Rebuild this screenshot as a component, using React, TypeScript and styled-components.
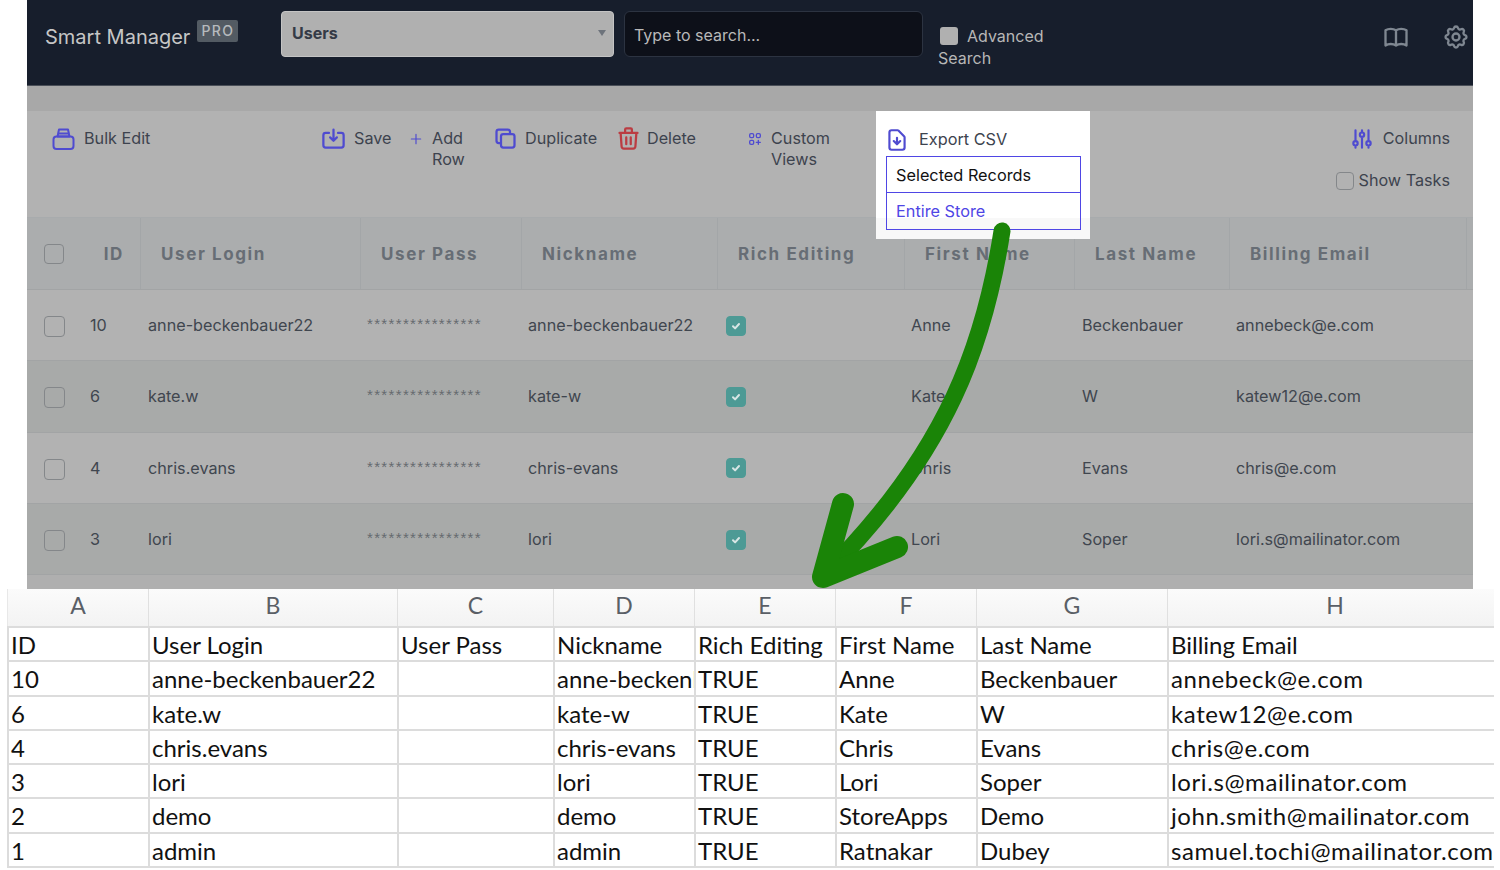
import React from "react";
import styled, { createGlobalStyle } from "styled-components";
import {
  HiOutlineAdjustments,
  HiOutlineBookOpen,
  HiOutlineCog,
  HiOutlineDocumentDownload,
  HiOutlineDuplicate,
  HiOutlineSave,
  HiOutlineTrash,
  HiOutlineViewGridAdd,
  HiOutlinePlus,
} from "react-icons/hi";

const Global = createGlobalStyle`
  html, body { margin: 0; padding: 0; background: #fff; }
  body { font-family: Inter, "Liberation Sans", sans-serif; }
`;

const Page = styled.div`
  position: relative;
  width: 1500px;
  height: 870px;
  overflow: hidden;
  background: #fff;
`;

const AppFrame = styled.section`
  position: relative;
  width: 1446px;
  height: 589px;
  margin-left: 27px;
  overflow: hidden;
  background: #afafaf;
`;

const Header = styled.header`
  display: flex;
  align-items: flex-start;
  height: 86px;
  padding: 11px 3px 0 18px;
  box-sizing: border-box;
  background: #171e2c;
  border-bottom: 1px solid #4a4f58;
`;

const Logo = styled.div`
  display: flex;
  align-items: flex-start;
  width: 236px;
  flex: none;
  padding-top: 9px;
  color: #c6c6c6;
  font-size: 20px;
  line-height: 34px;
`;

const ProBadge = styled.span`
  margin: 0 0 0 7px;
  height: 22px;
  width: 41px;
  box-sizing: border-box;
  text-align: center;
  border-radius: 2px;
  background: #535b63;
  color: #b6babd;
  font-size: 14px;
  font-weight: 500;
  letter-spacing: 1.4px;
  line-height: 21px;
`;

const SelectBox = styled.div`
  position: relative;
  flex: none;
  width: 333px;
  height: 46px;
  box-sizing: border-box;
  padding: 0 10px;
  border-radius: 4px;
  border: 1px solid #c4c4c4;
  background: #b0b0b0;
  color: #343a46;
  font-size: 16px;
  font-weight: 700;
  line-height: 43px;
`;

const Caret = styled.span`
  position: absolute;
  right: 7px;
  top: 18px;
  width: 0;
  height: 0;
  border-left: 4px solid transparent;
  border-right: 4px solid transparent;
  border-top: 6px solid #6d737b;
`;

const SearchBox = styled.div`
  flex: none;
  width: 299px;
  height: 46px;
  margin-left: 10px;
  box-sizing: border-box;
  padding: 0 9px;
  border-radius: 6px;
  border: 1px solid #2c3341;
  background-color: #0d1019;
  background-image: radial-gradient(#1b202c 0.6px, transparent 0.7px);
  background-size: 4px 4px;
  color: #b9b9b9;
  font-size: 16px;
  line-height: 46px;
`;

const Advanced = styled.label`
  flex: none;
  width: 116px;
  margin: 14px 0 0 15px;
  color: #b7b7b7;
  font-size: 16px;
  line-height: 22px;
`;

const AdvancedBox = styled.span`
  display: inline-block;
  width: 18px;
  height: 18px;
  margin: 0 9px 0 2px;
  vertical-align: -3px;
  border-radius: 3px;
  background: #b0b0b0;
`;

const HeaderIcons = styled.div`
  display: flex;
  align-items: center;
  gap: 32px;
  margin-left: auto;
  padding-top: 12px;
  color: #7f8791;
  font-size: 28px;
`;

const Band = styled.div`
  height: 25px;
  background: #a8a8a8;
`;

const Toolbar = styled.div`
  display: flex;
  align-items: flex-start;
  height: 107px;
  box-sizing: border-box;
  padding: 17px 23px 0 25px;
  background: #b2b2b2;
  border-bottom: 1px solid #a8abad;
  color: #3d434e;
  font-size: 16.2px;
  line-height: 21px;
`;

const Tool = styled.div<{ $w: number; $gap: number; $text?: number }>`
  display: flex;
  flex: none;
  width: ${(p) => p.$w}px;
  gap: ${(p) => p.$gap}px;
  & > span { width: ${(p) => (p.$text ? `${p.$text}px` : "auto")}; }
`;

const ToolIcon = styled.div<{ $c?: string; $s?: number; $w?: number }>`
  display: flex;
  justify-content: center;
  flex: none;
  width: ${(p) => p.$w ?? 22}px;
  height: 21px;
  align-items: center;
  color: ${(p) => p.$c ?? "#4f4bd0"};
  font-size: ${(p) => p.$s ?? 26}px;
  & > svg { flex: none; }
`;

const RightTools = styled.div`
  display: flex;
  flex-direction: column;
  align-items: flex-end;
  gap: 21px;
  margin-left: auto;
`;

const ColumnsTool = styled.div<{ $gap: number }>`
  display: flex;
  align-items: center;
  gap: ${(p) => p.$gap}px;
`;

const CheckBox = styled.span<{ $on?: boolean; $s?: number }>`
  display: flex;
  align-items: center;
  justify-content: center;
  flex: none;
  box-sizing: border-box;
  width: ${(p) => p.$s ?? 20}px;
  height: ${(p) => p.$s ?? 20}px;
  border-radius: 4px;
  border: 1px solid ${(p) => (p.$on ? "#4d9a95" : "#84878a")};
  background: ${(p) => (p.$on ? "#4d9a95" : "transparent")};
  color: #d8e6e5;
`;

const Row = styled.div<{ $alt?: boolean; $head?: boolean }>`
  display: grid;
  grid-template-columns: 57px 57px 220px 161px 196px 187px 170px 155px 237px 6px;
  height: ${(p) => (p.$head ? 72 : 71.33)}px;
  align-items: center;
  box-sizing: border-box;
  background: ${(p) => (p.$head ? "#abadae" : p.$alt ? "#a8aaa9" : "#b2b2b2")};
  border-bottom: 1px solid #a2a4a5;
  color: #40464f;
  font-size: 16.2px;
`;

const HeadCell = styled.div<{ $right?: boolean }>`
  display: flex;
  align-items: center;
  justify-content: ${(p) => (p.$right ? "flex-end" : "flex-start")};
  height: 100%;
  box-sizing: border-box;
  padding: ${(p) => (p.$right ? "0 16px 0 0" : "0 0 0 20px")};
  border-right: 1px solid #a3a6a8;
  color: #676d75;
  font-size: 17px;
  font-weight: 700;
  letter-spacing: 1.6px;
`;

const Cell = styled.div<{ $pad?: number }>`
  padding-left: ${(p) => p.$pad ?? 6}px;
  white-space: nowrap;
`;

const BoxCell = styled.div<{ $pad?: number; $top?: number }>`
  padding-left: ${(p) => p.$pad ?? 17}px;
  padding-top: ${(p) => p.$top ?? 0}px;
`;

const Stars = styled.div`
  padding: 0 0 3px 6px;
  color: #666a6f;
  font-family: "Liberation Sans", sans-serif;
  font-size: 15px;
  letter-spacing: 1.35px;
`;

const ExportPopup = styled.div`
  position: absolute;
  left: 849px;
  top: 111px;
  width: 214px;
  height: 128px;
  box-sizing: border-box;
  padding: 18px 9px 0 10px;
  background: linear-gradient(#fff 107px, #f8f8f8 107px);
  color: #3d434e;
  font-size: 16.3px;
  line-height: 21px;
`;

const ExportTitle = styled.div`
  display: flex;
  gap: 11px;
  height: 27px;
`;

const Option = styled.div<{ $active?: boolean }>`
  height: 37px;
  box-sizing: border-box;
  padding-left: 9px;
  border: 1px solid #4f46e5;
  border-top: ${(p) => (p.$active ? "none" : "1px solid #4f46e5")};
  color: ${(p) => (p.$active ? "#4f46e5" : "#111")};
  line-height: 36px;
`;

const Arrow = styled.svg`
  position: absolute;
  left: 0;
  top: 0;
  pointer-events: none;
`;

const Sheet = styled.section`
  width: 1487px;
  margin-left: 7px;
  overflow: hidden;
  font-family: Lato, "Open Sans", sans-serif;
  color: #111;
`;

const SheetRow = styled.div<{ $head?: boolean }>`
  display: grid;
  grid-template-columns: 141px 249px 156px 141px 141px 141px 191px 335px;
  height: ${(p) => (p.$head ? 39 : 34.3)}px;
  box-sizing: border-box;
  background: ${(p) => (p.$head ? "linear-gradient(#fbfbfb, #f3f3f3)" : "#fff")};
  border-bottom: 2px solid #dcdcdc;
`;

const Letter = styled.div`
  border-left: 1px solid #e0e0e0;
  text-align: center;
  color: #5a5f66;
  font-size: 23px;
  line-height: 32px;
  &:first-child { border-left: 1px solid #e8e8e8; }
`;

const SheetCell = styled.div<{ $wide?: boolean }>`
  overflow: hidden;
  white-space: nowrap;
  border-left: 2px solid #dcdcdc;
  padding-left: 2px;
  font-size: 24px;
  letter-spacing: ${(p) => (p.$wide ? 0.6 : 0)}px;
  line-height: 34px;
`;

const rows = [
  ["10", "anne-beckenbauer22", "anne-beckenbauer22", "Anne", "Beckenbauer", "annebeck@e.com"],
  ["6", "kate.w", "kate-w", "Kate", "W", "katew12@e.com"],
  ["4", "chris.evans", "chris-evans", "Chris", "Evans", "chris@e.com"],
  ["3", "lori", "lori", "Lori", "Soper", "lori.s@mailinator.com"],
];

const sheet = [
  ["ID", "User Login", "User Pass", "Nickname", "Rich Editing", "First Name", "Last Name", "Billing Email"],
  ["10", "anne-beckenbauer22", "", "anne-beckenbauer22", "TRUE", "Anne", "Beckenbauer", "annebeck@e.com"],
  ["6", "kate.w", "", "kate-w", "TRUE", "Kate", "W", "katew12@e.com"],
  ["4", "chris.evans", "", "chris-evans", "TRUE", "Chris", "Evans", "chris@e.com"],
  ["3", "lori", "", "lori", "TRUE", "Lori", "Soper", "lori.s@mailinator.com"],
  ["2", "demo", "", "demo", "TRUE", "StoreApps", "Demo", "john.smith@mailinator.com"],
  ["1", "admin", "", "admin", "TRUE", "Ratnakar", "Dubey", "samuel.tochi@mailinator.com"],
];

const BulkIcon = () => (
  <svg width="23" height="24" viewBox="0 0 23 24" fill="none" stroke="currentColor" strokeWidth="2" strokeLinejoin="round">
    <path d="M7 2.5h9l1.5 7h-12z" />
    <path d="M6 6.5h11" />
    <rect x="1.5" y="9.5" width="20" height="12.5" rx="3" />
  </svg>
);

const Check = () => (
  <svg width="12" height="12" viewBox="0 0 12 12" fill="none" stroke="currentColor" strokeWidth="2" strokeLinecap="round" strokeLinejoin="round">
    <path d="M3 6.3l2.1 2.1L9 4" />
  </svg>
);

export default function App() {
  return (
    <Page>
      <Global />
      <AppFrame>
        <Header>
          <Logo>
            Smart Manager<ProBadge>PRO</ProBadge>
          </Logo>
          <SelectBox>
            Users
            <Caret />
          </SelectBox>
          <SearchBox>Type to search...</SearchBox>
          <Advanced>
            <AdvancedBox />
            Advanced Search
          </Advanced>
          <HeaderIcons>
            <HiOutlineBookOpen />
            <HiOutlineCog />
          </HeaderIcons>
        </Header>
        <Band />
        <Toolbar>
          <Tool $w={270} $gap={10}>
            <ToolIcon><BulkIcon /></ToolIcon>
            <span>Bulk Edit</span>
          </Tool>
          <Tool $w={88} $gap={10}>
            <ToolIcon $s={27}><HiOutlineSave /></ToolIcon>
            <span>Save</span>
          </Tool>
          <Tool $w={84} $gap={11}>
            <ToolIcon $w={11} $s={14}><HiOutlinePlus /></ToolIcon>
            <span>Add Row</span>
          </Tool>
          <Tool $w={123} $gap={9}>
            <ToolIcon $s={27}><HiOutlineDuplicate /></ToolIcon>
            <span>Duplicate</span>
          </Tool>
          <Tool $w={131} $gap={8}>
            <ToolIcon $c="#bb3c42" $s={27}><HiOutlineTrash /></ToolIcon>
            <span>Delete</span>
          </Tool>
          <Tool $w={120} $gap={10} $text={70}>
            <ToolIcon $w={13} $s={16}><HiOutlineViewGridAdd /></ToolIcon>
            <span>Custom Views</span>
          </Tool>
          <RightTools>
            <ColumnsTool $gap={10}>
              <ToolIcon $s={26}><HiOutlineAdjustments /></ToolIcon>
              <span>Columns</span>
            </ColumnsTool>
            <ColumnsTool $gap={5}>
              <CheckBox $s={18} />
              <span>Show Tasks</span>
            </ColumnsTool>
          </RightTools>
        </Toolbar>
        <Row $head>
          <BoxCell $top={1}><CheckBox /></BoxCell>
          <HeadCell $right>ID</HeadCell>
          <HeadCell>User Login</HeadCell>
          <HeadCell>User Pass</HeadCell>
          <HeadCell>Nickname</HeadCell>
          <HeadCell>Rich Editing</HeadCell>
          <HeadCell>First Name</HeadCell>
          <HeadCell>Last Name</HeadCell>
          <HeadCell>Billing Email</HeadCell>
        </Row>
        {rows.map((r, i) => (
          <Row key={r[0]} $alt={i % 2 === 1}>
            <BoxCell $top={3}><CheckBox $s={21} /></BoxCell>
            <Cell>{r[0]}</Cell>
            <Cell $pad={7}>{r[1]}</Cell>
            <Stars>****************</Stars>
            <Cell>{r[2]}</Cell>
            <BoxCell $pad={8} $top={1}><CheckBox $on><Check /></CheckBox></BoxCell>
            <Cell>{r[3]}</Cell>
            <Cell $pad={7}>{r[4]}</Cell>
            <Cell>{r[5]}</Cell>
          </Row>
        ))}
        <ExportPopup>
          <ExportTitle>
            <ToolIcon $s={26}><HiOutlineDocumentDownload /></ToolIcon>
            <span>Export CSV</span>
          </ExportTitle>
          <Option>Selected Records</Option>
          <Option $active>Entire Store</Option>
        </ExportPopup>
        <Arrow width="1446" height="589" viewBox="27 0 1446 589" fill="none" stroke="#1a8407" strokeLinecap="round" strokeLinejoin="round">
          <path d="M1002 231 C 985 340, 950 450, 824 575" strokeWidth="17" />
          <path d="M843 504 L 823 577 L 897 547" strokeWidth="22" />
        </Arrow>
      </AppFrame>
      <Sheet>
        <SheetRow $head>
          {"ABCDEFGH".split("").map((l) => (
            <Letter key={l}>{l}</Letter>
          ))}
        </SheetRow>
        {sheet.map((r, ri) => (
          <SheetRow key={r[0]}>
            {r.map((c, i) => (
              <SheetCell key={i} $wide={i === 7 && ri > 0}>{c}</SheetCell>
            ))}
          </SheetRow>
        ))}
      </Sheet>
    </Page>
  );
}
